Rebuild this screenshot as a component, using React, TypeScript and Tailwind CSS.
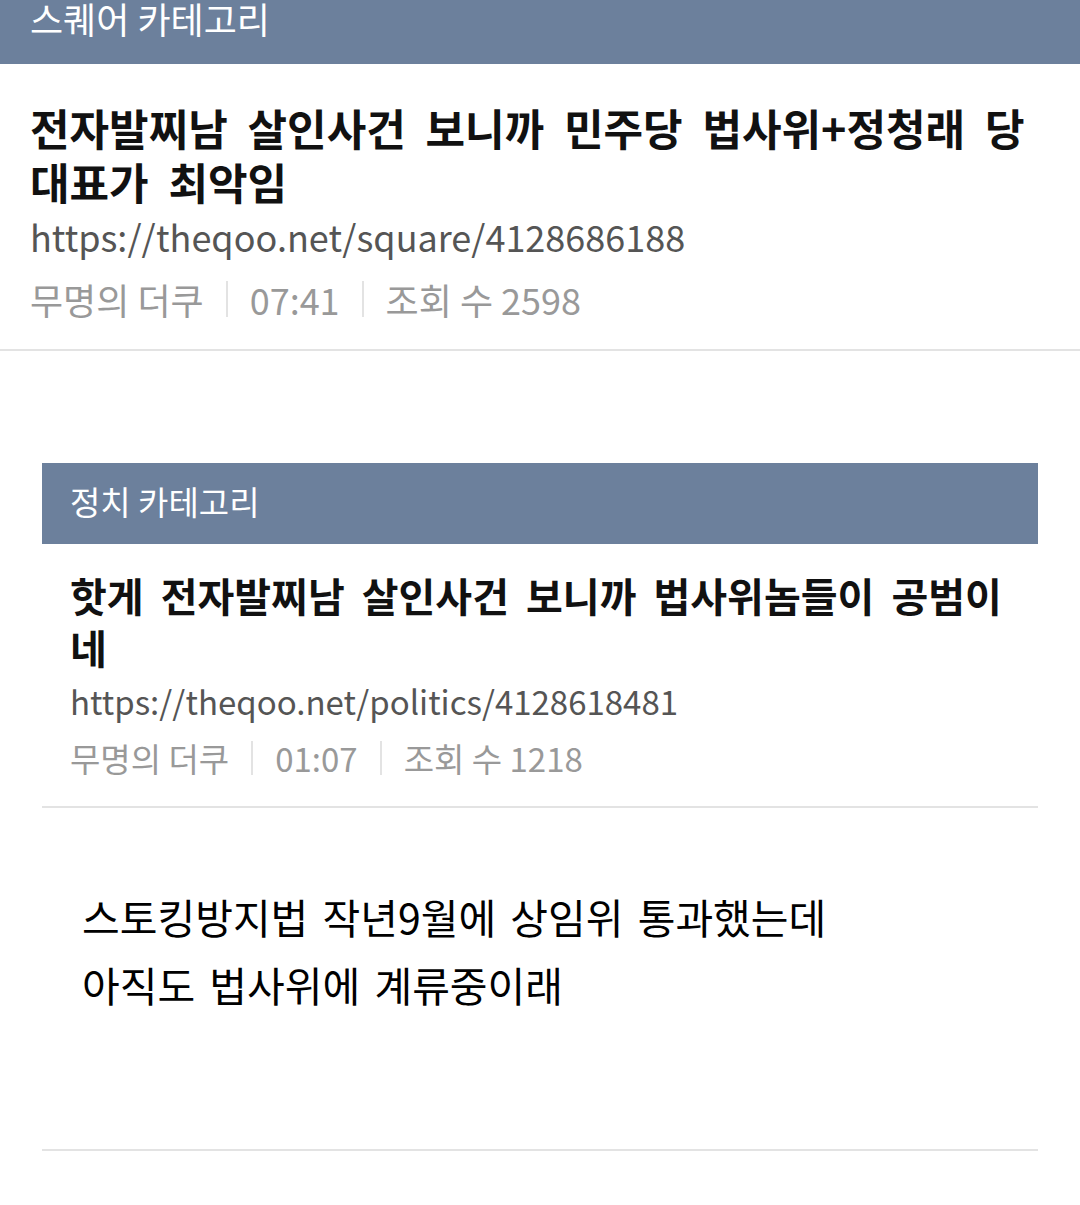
import React from "react";

const F = { fontFamily: '"Noto Sans CJK KR", "Noto Sans", sans-serif' };

function Sep({ h }: { h: string }) {
  return <span className={`inline-block w-[2px] bg-[#e3e3e3] mx-[22px] ${h}`} />;
}

export default function App() {
  return (
    <div className="w-[1080px] h-[1205px] bg-white overflow-hidden" style={F}>
      <div className="h-[64px] bg-[#6c809c] overflow-hidden px-[30px]">
        <div className="text-white text-[36px] leading-[40px] -mt-[2px]">스퀘어 카테고리</div>
      </div>
      <div className="px-[30px] pt-[36px] pb-[28px] border-b-2 border-[#e3e3e3]">
        <div className="text-[43px] leading-[54px] font-bold text-[#111] [word-spacing:10px]">
          전자발찌남 살인사건 보니까 민주당 법사위+정청래 당 대표가 최악임
        </div>
        <div className="text-[36px] leading-[44px] text-[#555] mt-[6px]">https://theqoo.net/square/4128686188</div>
        <div className="text-[36px] leading-[44px] text-[#999] mt-[19px] flex items-center">
          <span>무명의 더쿠</span>
          <Sep h="h-[36px]" />
          <span>07:41</span>
          <Sep h="h-[36px]" />
          <span>조회 수 2598</span>
        </div>
      </div>
      <div className="px-[42px] pt-[112px]">
        <div className="h-[81px] bg-[#6c809c] px-[28px] flex items-center">
          <div className="text-white text-[33px] leading-[40px] -mt-[6px]">정치 카테고리</div>
        </div>
        <div className="px-[28px] pt-[25px] pb-[28px] border-b-2 border-[#e3e3e3]">
          <div className="text-[40px] leading-[52px] font-bold text-[#111] [word-spacing:8px]">
            핫게 전자발찌남 살인사건 보니까 법사위놈들이 공범이네
          </div>
          <div className="text-[33px] leading-[40px] text-[#555] mt-[8px]">https://theqoo.net/politics/4128618481</div>
          <div className="text-[33px] leading-[40px] text-[#999] mt-[17px] flex items-center">
            <span>무명의 더쿠</span>
            <Sep h="h-[34px]" />
            <span>01:07</span>
            <Sep h="h-[34px]" />
            <span>조회 수 1218</span>
          </div>
        </div>
        <div className="px-[40px] pt-[74px] pb-[131px] border-b-2 border-[#e3e3e3]">
          <div className="text-[41px] leading-[68px] text-black [word-spacing:5px]">
            <div>스토킹방지법 작년9월에 상임위 통과했는데</div>
            <div>아직도 법사위에 계류중이래</div>
          </div>
        </div>
      </div>
    </div>
  );
}
